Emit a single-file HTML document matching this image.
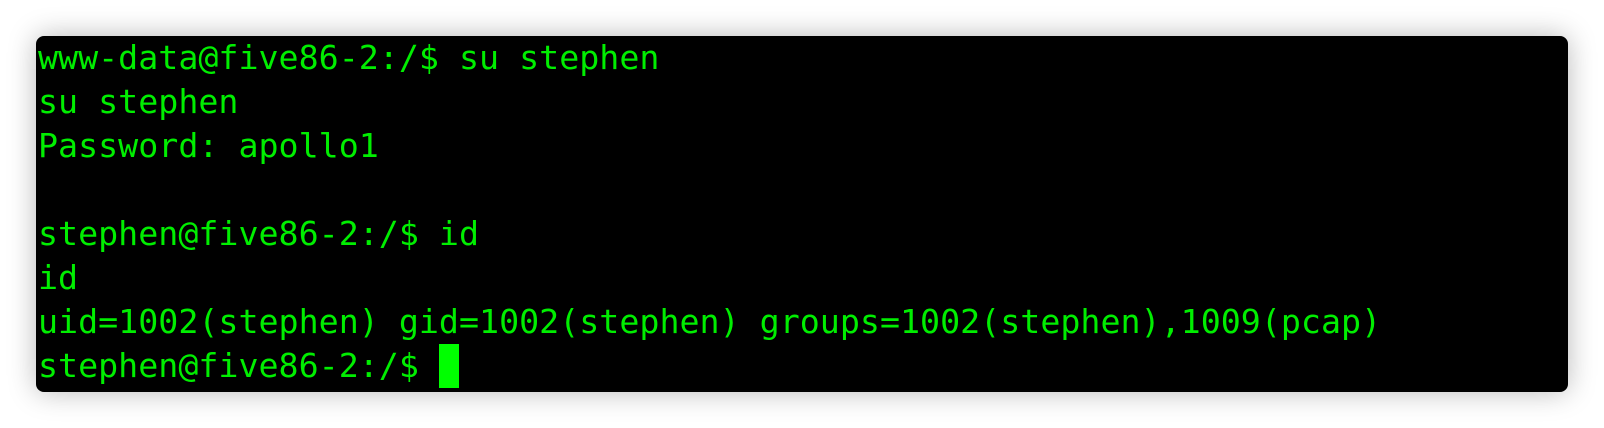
<!DOCTYPE html>
<html><head><meta charset="utf-8"><style>
html,body{margin:0;padding:0;background:#fff;width:1604px;height:428px;overflow:hidden}
.t{position:absolute;left:36px;top:36px;width:1532px;height:356px;background:#000;border-radius:8px;box-shadow:0 0 28px rgba(0,0,0,0.28)}
pre{margin:0;position:absolute;left:2px;top:0;font-family:"DejaVu Sans Mono",monospace;font-size:33.3px;line-height:44px;color:#00ee00}
.c{display:inline-block;width:20px;height:44px;background:#00ff00;vertical-align:top}
</style></head><body>
<div class="t"><pre>www-data@five86-2:/$ su stephen
su stephen
Password: apollo1

stephen@five86-2:/$ id
id
uid=1002(stephen) gid=1002(stephen) groups=1002(stephen),1009(pcap)
stephen@five86-2:/$ <span class="c"></span></pre></div>
</body></html>
